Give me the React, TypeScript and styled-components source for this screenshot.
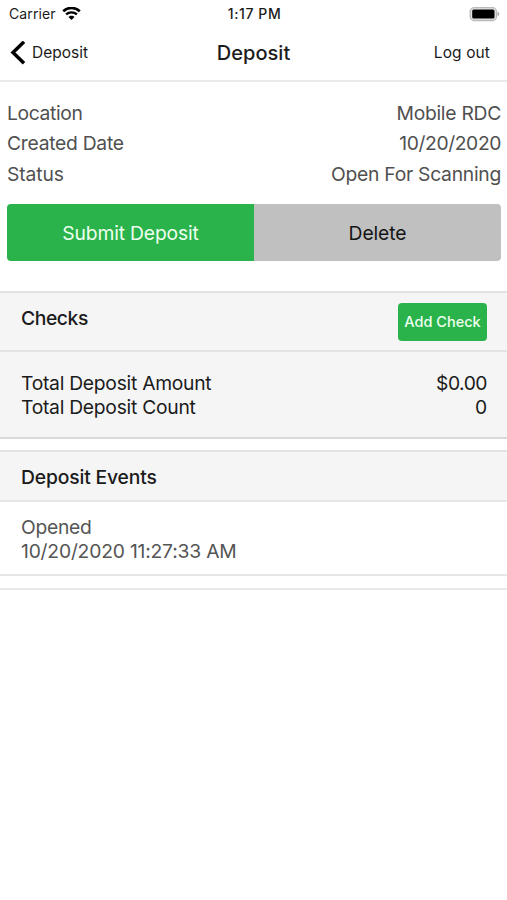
import React from "react";
import styled, { createGlobalStyle } from "styled-components";

const GlobalStyle = createGlobalStyle`
  * { box-sizing: border-box; }
  body { margin: 0; background: #fff; }
  button { border: 0; margin: 0; padding: 0; background: none; font: inherit; color: inherit; }
`;

const Screen = styled.div`
  width: 100%;
  height: 900px;
  overflow: hidden;
  background: #fff;
  color: #1b1b1b;
  font-family: Inter, "Liberation Sans", sans-serif;
  font-size: 19.3px;
  line-height: 24.5px;
`;

const Text = styled.span<{ $size?: number; $weight?: number; $spacing?: number }>`
  white-space: nowrap;
  ${(p) => p.$size && `font-size: ${p.$size}px;`}
  font-weight: ${(p) => p.$weight ?? 400};
  letter-spacing: ${(p) => p.$spacing ?? -0.27}px;
`;

const Bar = styled.div`
  display: grid;
  grid-template-columns: 1fr auto 1fr;
  align-items: center;
`;

const StatusBar = styled(Bar)`
  height: 28px;
  padding: 0 7px 0 9px;
`;

const NavBar = styled(Bar)`
  height: 54px;
  padding: 0 17px 2px 10px;
  border-bottom: 2px solid #e9e9e9;
`;

const NavTitle = styled.div`
  padding-left: 7px;
`;

const Start = styled.div<{ $gap: number }>`
  display: flex;
  align-items: center;
  gap: ${(p) => p.$gap}px;
`;

const End = styled.div`
  display: flex;
  justify-content: flex-end;
  align-items: center;
`;

const Details = styled.dl`
  margin: 0;
  padding: 15.5px 6px 0 7px;
  color: #505050;
  line-height: 30.5px;
`;

const Row = styled.div`
  display: flex;
  justify-content: space-between;
  dd { margin: 0; }
`;

const Actions = styled.div`
  display: grid;
  grid-template-columns: 247px 1fr;
  height: 57px;
  margin: 15px 6px 30px 7px;
  border-radius: 4px;
  overflow: hidden;
`;

const Action = styled.button<{ $primary?: boolean }>`
  padding-top: 2px;
  background: ${(p) => (p.$primary ? "#2bb34b" : "#c0c0c0")};
  color: ${(p) => (p.$primary ? "#eefff0" : "#151515")};
`;

const SectionHead = styled.div<{ $height: number }>`
  display: flex;
  justify-content: space-between;
  align-items: center;
  height: ${(p) => p.$height}px;
  padding: 0 20px 0 21px;
  background: #f5f5f5;
  border-top: 2px solid #e3e3e3;
`;

const ChecksTitle = styled.div`
  margin-bottom: 7px;
`;

const EventsTitle = styled.div`
  padding-top: 2px;
`;

const AddButton = styled.button`
  width: 89px;
  height: 38px;
  border-radius: 4px;
  background: #2bb34b;
  color: #eefff0;
`;

const Totals = styled.div`
  height: 89px;
  padding: 18.5px 20px 0 21px;
  background: #f5f5f5;
  border-top: 2px solid #e3e3e3;
  border-bottom: 2px solid #d9d9d9;
`;

const Gap = styled.div`
  height: 11px;
`;

const EventItem = styled.div`
  display: flex;
  flex-direction: column;
  height: 76px;
  padding: 12.5px 21px 0;
  color: #555;
  line-height: 24.4px;
  border-top: 2px solid #e6e6e6;
  border-bottom: 2px solid #e6e6e6;
`;

const EndRule = styled.div`
  height: 2px;
  margin-top: 12px;
  background: #e9e9e9;
`;

const WifiIcon = () => (
  <svg width="19" height="14" viewBox="0 0 19 14" fill="none" stroke="#000">
    <path d="M1.2 4.2C5.8-.1 13.2-.1 17.8 4.2" strokeWidth="2.7" />
    <path d="M4.1 7.4c3-2.7 7.8-2.7 10.8 0" strokeWidth="2.4" />
    <path d="M9.5 13 6.5 10c1.5-1.6 4.5-1.6 6 0Z" fill="#000" stroke="none" />
  </svg>
);

const BatteryIcon = () => (
  <svg width="31" height="15" viewBox="0 0 31 15">
    <rect x="1.2" y=".7" width="26.3" height="12.8" rx="4" fill="#e4e4e4" stroke="#b9b9b9" strokeWidth="1.3" />
    <rect x="3.2" y="2.4" width="22.3" height="9.2" rx="1.5" fill="#000" />
    <path d="M28.5 4.8c2.4.7 2.4 3.7 0 4.4Z" fill="#aaa" />
  </svg>
);

const BackIcon = () => (
  <svg width="16" height="24" viewBox="0 0 16 24" fill="none" stroke="#000" strokeWidth="3.5">
    <path d="M14 .8 3 11.5l11 10.7" />
  </svg>
);

export default function App() {
  return (
    <>
      <GlobalStyle />
      <Screen>
        <StatusBar>
          <Start $gap={6}>
            <Text $size={14} $spacing={0.1}>Carrier</Text>
            <WifiIcon />
          </Start>
          <Text $size={14} $weight={550} $spacing={0.6}>1:17 PM</Text>
          <End><BatteryIcon /></End>
        </StatusBar>
        <NavBar>
          <Start $gap={6}>
            <BackIcon />
            <Text $size={15.5} $spacing={0}>Deposit</Text>
          </Start>
          <NavTitle><Text $size={20} $weight={550} $spacing={0.05}>Deposit</Text></NavTitle>
          <End><Text $size={15.5} $spacing={0.1}>Log out</Text></End>
        </NavBar>
        <Details>
          <Row><dt><Text $spacing={-0.35}>Location</Text></dt><dd><Text>Mobile RDC</Text></dd></Row>
          <Row><dt><Text>Created Date</Text></dt><dd><Text $spacing={-0.4}>10/20/2020</Text></dd></Row>
          <Row><dt><Text $spacing={-0.1}>Status</Text></dt><dd><Text>Open For Scanning</Text></dd></Row>
        </Details>
        <Actions>
          <Action $primary><Text $spacing={-0.15}>Submit Deposit</Text></Action>
          <Action><Text $spacing={-0.1}>Delete</Text></Action>
        </Actions>
        <SectionHead $height={59}>
          <ChecksTitle><Text $weight={450} $spacing={-0.4}>Checks</Text></ChecksTitle>
          <AddButton><Text $size={14.5} $weight={500} $spacing={0}>Add Check</Text></AddButton>
        </SectionHead>
        <Totals>
          <Row><Text>Total Deposit Amount</Text><Text $spacing={-0.5}>$0.00</Text></Row>
          <Row><Text>Total Deposit Count</Text><Text>0</Text></Row>
        </Totals>
        <Gap />
        <SectionHead $height={50}>
          <EventsTitle><Text $weight={500} $spacing={-0.15}>Deposit Events</Text></EventsTitle>
        </SectionHead>
        <EventItem>
          <Text>Opened</Text>
          <Text $spacing={-0.2}>10/20/2020 11:27:33 AM</Text>
        </EventItem>
        <EndRule />
      </Screen>
    </>
  );
}
